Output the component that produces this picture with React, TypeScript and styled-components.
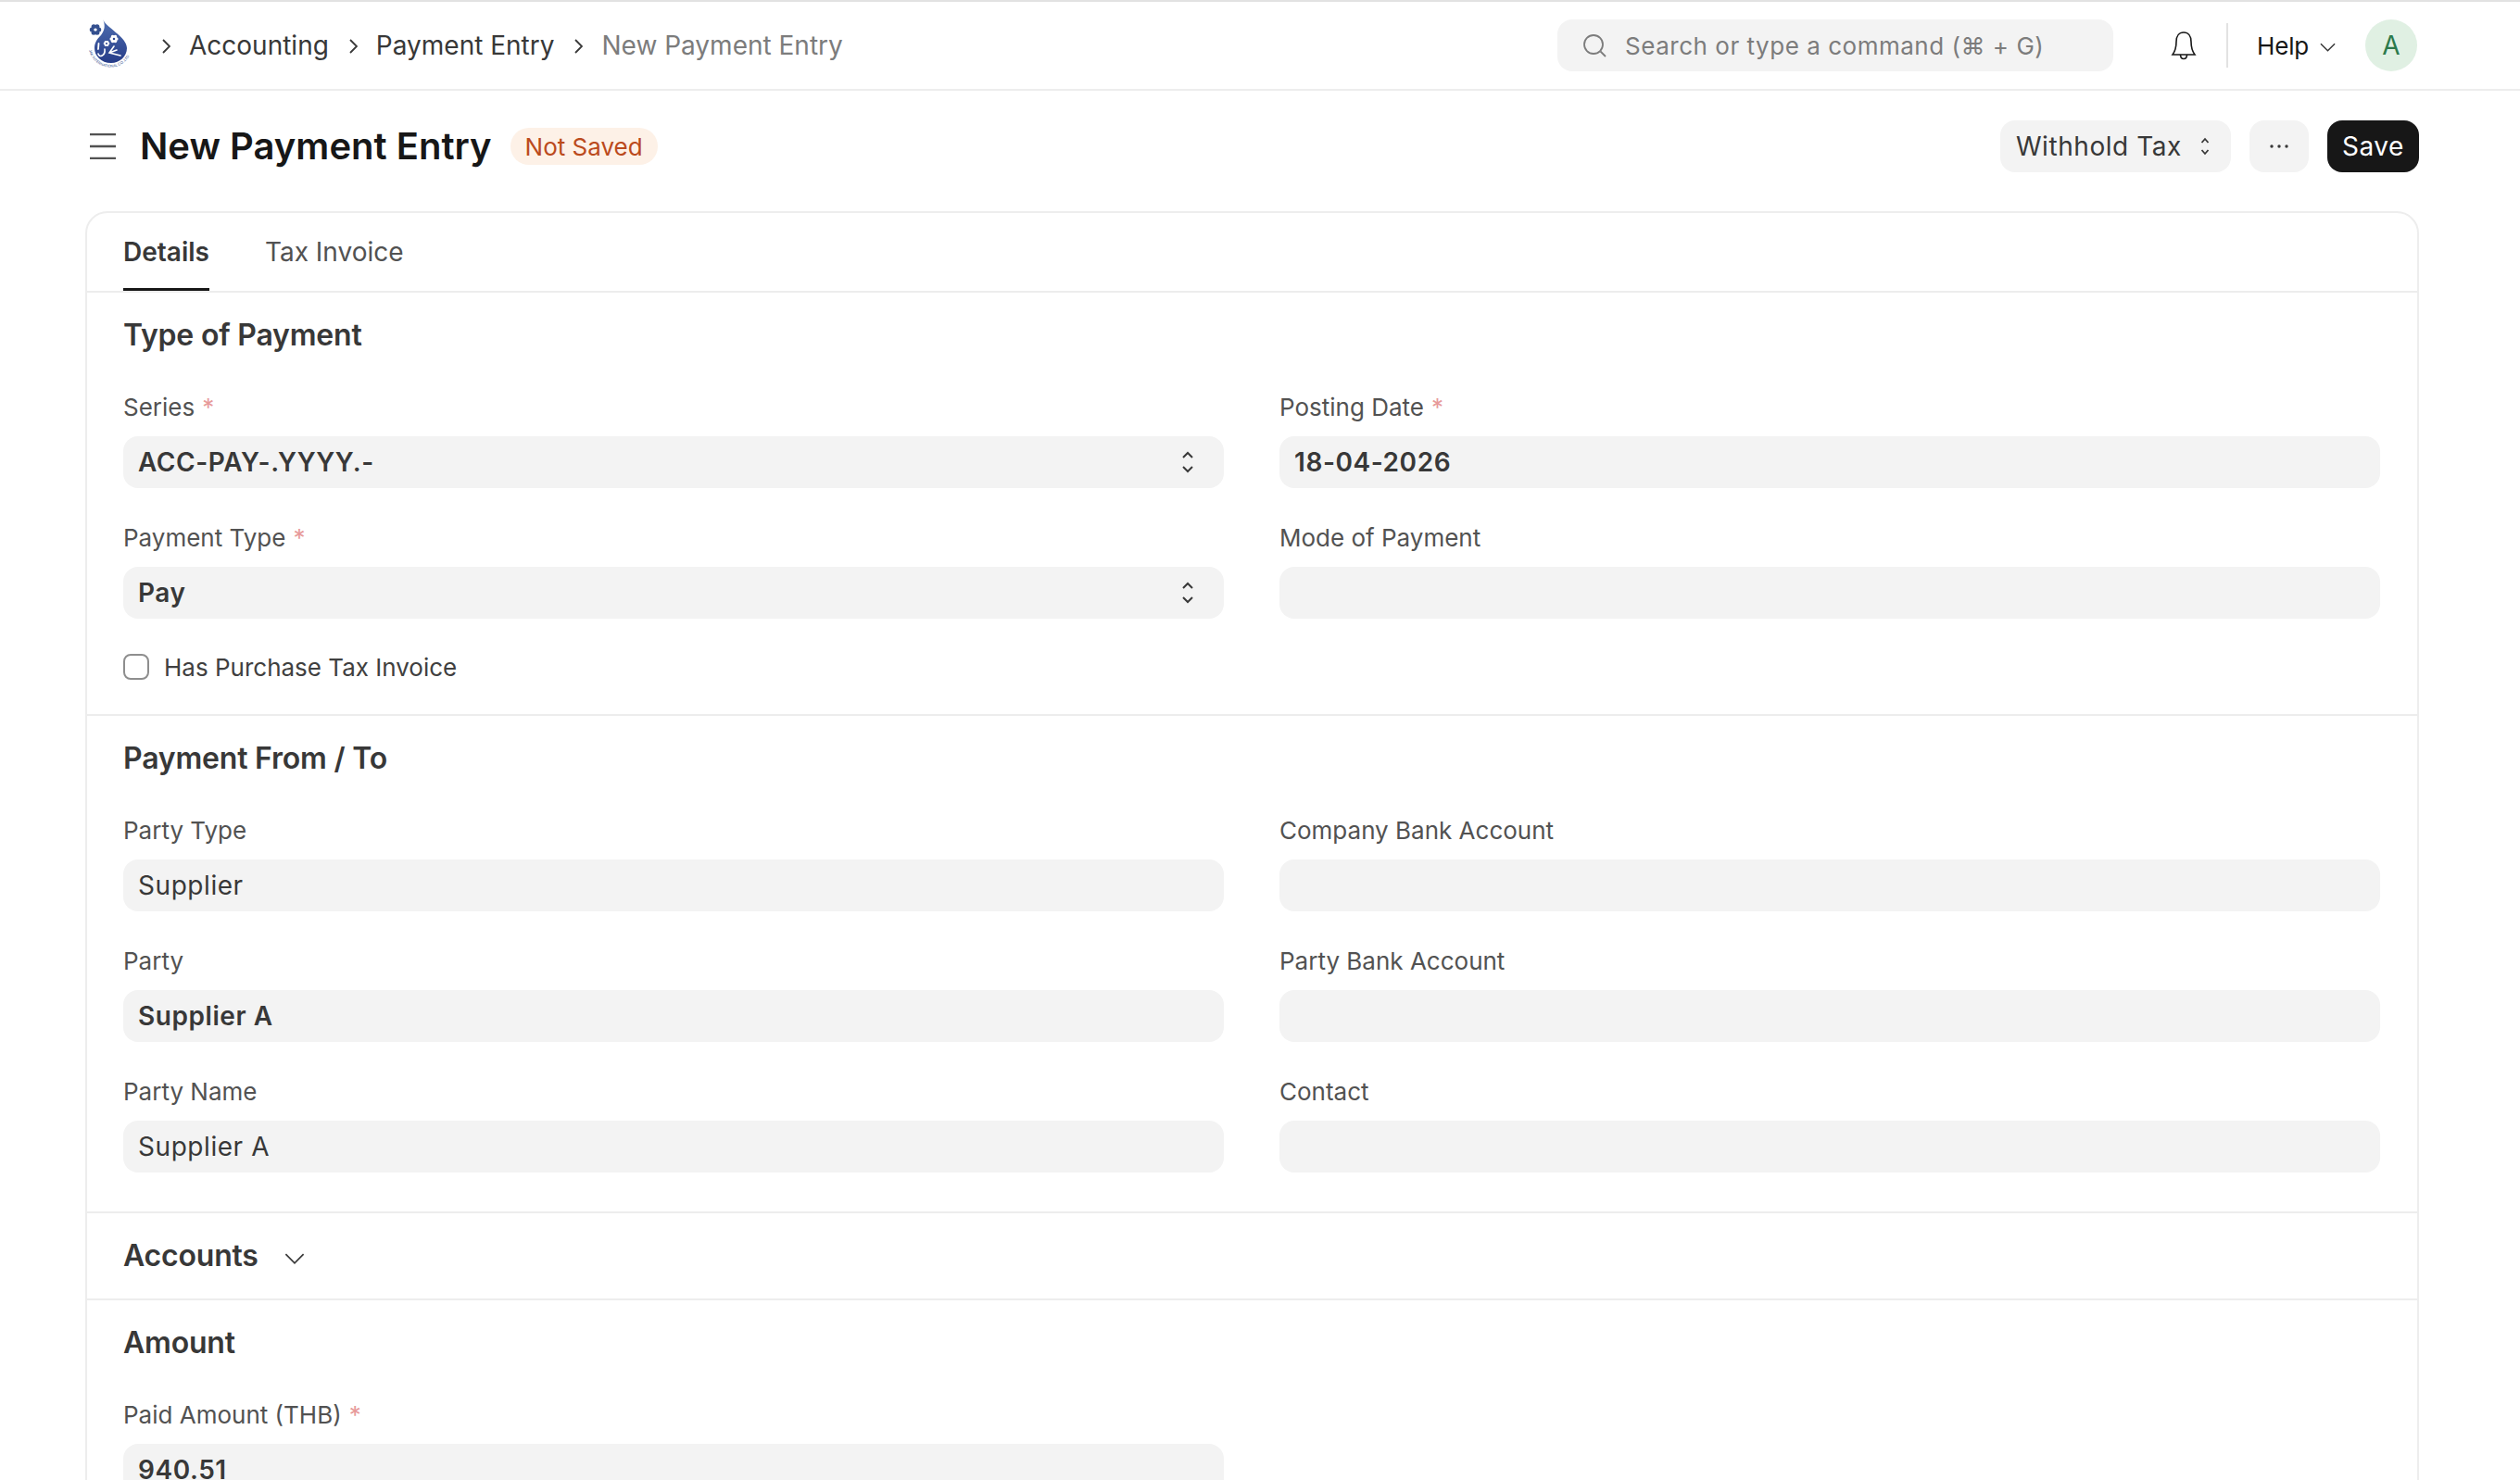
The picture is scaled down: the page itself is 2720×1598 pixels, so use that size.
import React from "react"
import styled, { createGlobalStyle } from "styled-components"

const GlobalStyle = createGlobalStyle`
  * {
    box-sizing: border-box;
  }
  html, body {
    margin: 0;
    height: 1598px;
    overflow: hidden;
    background: #fff;
  }
  body {
    font-family: "Inter", "Liberation Sans", sans-serif;
    font-size: 26px;
    color: #383838;
  }
`

const Navbar = styled.header`
  height: 98px;
  border-top: 2px solid #e2e2e2;
  border-bottom: 2px solid #ededed;
  display: flex;
  align-items: center;
  padding: 0 111px 0 92px;
`
const Crumbs = styled.nav`
  display: flex;
  align-items: center;
  flex: 1;
  margin-left: 11px;
`
const CrumbSep = styled.svg`
  width: 10px;
  height: 16px;
  margin: 2px 20px 0 21px;
  fill: none;
  stroke: #383838;
  stroke-width: 1.8;
`
const Crumb = styled.span<{ $muted?: boolean }>`
  font-size: 28px;
  line-height: 40px;
  color: ${(p) => (p.$muted ? "#7c7c7c" : "#383838")};
`
const Search = styled.div`
  width: 600px;
  height: 56px;
  border-radius: 16px;
  background: #f3f3f3;
  display: flex;
  align-items: center;
  gap: 20px;
  padding-left: 27px;
  font-size: 26px;
  letter-spacing: 0.52px;
  color: #7c7c7c;
  svg {
    width: 26px;
    height: 26px;
    fill: none;
    stroke: #7c7c7c;
    stroke-width: 1.8;
  }
`
const BellBtn = styled.svg`
  width: 28px;
  height: 32px;
  margin-left: 62px;
  fill: none;
  stroke: #171717;
  stroke-width: 1.6;
`
const NavDivider = styled.div`
  width: 2px;
  height: 48px;
  background: #e2e2e2;
  margin: 0 31px 0 32px;
`
const Help = styled.div`
  display: flex;
  align-items: center;
  gap: 12px;
  color: #171717;
  font-size: 26px;
  letter-spacing: -0.2px;
  svg {
    width: 17px;
    height: 10px;
    margin-top: 4px;
    fill: none;
    stroke: #383838;
    stroke-width: 1.6;
  }
`
const Avatar = styled.div`
  width: 56px;
  height: 56px;
  margin-left: 32px;
  border-radius: 50%;
  background: #e0f0e3;
  color: #2c7a4b;
  display: flex;
  align-items: center;
  justify-content: center;
  font-size: 28px;
`

const PageHead = styled.div`
  height: 130px;
  display: flex;
  align-items: center;
  padding: 0 109px 10px 92px;
`
const Burger = styled.svg`
  width: 28px;
  height: 28px;
  margin-left: 5px;
  stroke: #525252;
  stroke-width: 2.4;
  fill: none;
`
const Title = styled.h1`
  margin: 0 0 0 26px;
  font-size: 40px;
  font-weight: 600;
  color: #171717;
  line-height: 56px;
`
const Badge = styled.span`
  margin-left: 20px;
  height: 40px;
  padding: 0 16px;
  border-radius: 20px;
  background: #fdf1e7;
  color: #bb4a1c;
  font-size: 26px;
  display: flex;
  align-items: center;
`
const Actions = styled.div`
  margin-left: auto;
  display: flex;
  gap: 20px;
`
const Button = styled.button<{ $primary?: boolean }>`
  font: inherit;
  font-size: 28px;
  letter-spacing: 0.56px;
  height: 56px;
  border: 0;
  border-radius: 16px;
  padding: 0 16px;
  display: flex;
  align-items: center;
  gap: 20px;
  background: ${(p) => (p.$primary ? "#171717" : "#f3f3f3")};
  color: ${(p) => (p.$primary ? "#fff" : "#383838")};
`
const WithholdButton = styled(Button)`
  padding: 0 23px 0 17px;
`
const DotsButton = styled(Button)`
  width: 64px;
  justify-content: center;
  padding: 0;
`
const UpDown = styled.svg`
  width: 10px;
  height: 20px;
  fill: none;
  stroke: #383838;
  stroke-width: 1.8;
`

const Card = styled.main`
  margin: 0 109px 0 92px;
  border: 2px solid #ededed;
  border-radius: 24px;
`
const Tabs = styled.div`
  height: 86px;
  padding: 0 39px;
  display: flex;
  gap: 60px;
  border-bottom: 2px solid #ededed;
`
const Tab = styled.div<{ $active?: boolean }>`
  height: 84px;
  padding-top: 3px;
  display: flex;
  align-items: center;
  font-size: 28px;
  font-weight: ${(p) => (p.$active ? 600 : 400)};
  color: ${(p) => (p.$active ? "#383838" : "#525252")};
  border-bottom: 3px solid ${(p) => (p.$active ? "#171717" : "transparent")};
`
const Section = styled.section<{ $bottom: number }>`
  padding: 26px 39px ${(p) => p.$bottom}px;
  & + & {
    border-top: 2px solid #ededed;
  }
`
const SectionTitle = styled.h2<{ $gap?: number }>`
  margin: 0 0 ${(p) => p.$gap ?? 42}px;
  font-size: 32px;
  line-height: 40px;
  font-weight: 600;
  letter-spacing: -0.2px;
  color: #383838;
  display: flex;
  align-items: center;
  gap: 28px;
  svg {
    width: 22px;
    height: 12px;
    margin-top: 6px;
    fill: none;
    stroke: #383838;
    stroke-width: 1.4;
  }
`
const FormGrid = styled.div`
  display: grid;
  grid-template-columns: 1188px 1188px;
  column-gap: 60px;
  row-gap: 38px;
`
const Field = styled.div``
const Label = styled.label`
  display: block;
  height: 32px;
  line-height: 32px;
  margin-bottom: 15px;
  font-size: 26px;
  color: #525252;
`
const Req = styled.span`
  color: #e79a9a;
  margin-left: 8px;
`
const Input = styled.div<{ $bold?: boolean }>`
  height: 56px;
  border-radius: 16px;
  background: #f3f3f3;
  padding: 0 16px;
  display: flex;
  align-items: center;
  justify-content: space-between;
  font-size: 28px;
  color: #383838;
  font-weight: ${(p) => (p.$bold ? 600 : 400)};
  letter-spacing: 0.56px;
`
const SelectArrows = styled.svg`
  width: 14px;
  height: 24px;
  margin-right: 16px;
  fill: none;
  stroke: #383838;
  stroke-width: 2;
`
const CheckRow = styled.div`
  margin-top: 38px;
  display: flex;
  align-items: center;
  gap: 16px;
  height: 28px;
  font-size: 26px;
  color: #404040;
`
const Checkbox = styled.span`
  width: 28px;
  height: 28px;
  border: 2px solid #8e8e8e;
  border-radius: 8px;
  background: #fff;
`

const Flower = ({ x, y, r }: { x: number; y: number; r: number }) => (
  <g>
    {[0, 60, 120, 180, 240, 300].map((a) => (
      <circle
        key={a}
        cx={x + r * 0.62 * Math.cos((a * Math.PI) / 180)}
        cy={y + r * 0.62 * Math.sin((a * Math.PI) / 180)}
        r={r * 0.42}
      />
    ))}
  </g>
)

const Logo = () => (
  <svg width="50" height="56" viewBox="0 0 50 56">
    <defs>
      <linearGradient id="drop" x1="0" y1="0" x2="0" y2="1">
        <stop offset="0" stopColor="#4f6fb0" />
        <stop offset="1" stopColor="#263c88" />
      </linearGradient>
      <path id="arc" d="M4 33 A23.5 23.5 0 0 0 50 33" />
    </defs>
    <path
      d="M19 0 C23 9 45 19 45 31 C45 40 37 47 28 47 C17 47 10 39 10 31 C10 25 13 21 17 17 C21 12 22 6 19 0Z"
      fill="url(#drop)"
    />
    <g fill="#34508f">
      <Flower x={11} y={11} r={6} />
    </g>
    <circle cx="11" cy="11" r="1.6" fill="#fff" />
    <g fill="#fff">
      <Flower x={31} y={21} r={4.4} />
      <Flower x={23} y={26} r={3.2} />
    </g>
    <circle cx="31" cy="21" r="1.2" fill="#2f4790" />
    <circle cx="23" cy="26" r="0.9" fill="#2f4790" />
    <g fill="none" stroke="#fff" strokeLinecap="round">
      <path d="M14.5 26 L14 32" strokeWidth="1.8" />
      <path d="M21 32 C22 39 15 42 14 37" strokeWidth="1.6" />
      <path d="M31 29 L26 36 L38 39 M26 36 L34 33" strokeWidth="1.6" />
    </g>
    <text fontSize="4" fill="#34508f" fontFamily="Liberation Sans, sans-serif">
      <textPath href="#arc">JAK INTERNATIONAL CO.,LTD</textPath>
    </text>
  </svg>
)

const Sep = () => (
  <CrumbSep viewBox="0 0 10 16">
    <path d="M2 1l7 7-7 7" />
  </CrumbSep>
)

const SelectIcon = () => (
  <SelectArrows viewBox="0 0 14 24">
    <path d="M2 7l5-5 5 5M2 17l5 5 5-5" />
  </SelectArrows>
)

const Chevron = () => (
  <svg viewBox="0 0 18 10">
    <path d="M1 1l8 8 8-8" />
  </svg>
)

type FieldDef = {
  label: string
  value?: string
  req?: boolean
  bold?: boolean
  select?: boolean
}

const FormField = ({ label, value, req, bold, select }: FieldDef) => (
  <Field>
    <Label>
      {label}
      {req && <Req>*</Req>}
    </Label>
    <Input $bold={bold}>
      {value}
      {select && <SelectIcon />}
    </Input>
  </Field>
)

const typeFields: FieldDef[] = [
  { label: "Series", value: "ACC-PAY-.YYYY.-", req: true, bold: true, select: true },
  { label: "Posting Date", value: "18-04-2026", req: true, bold: true },
  { label: "Payment Type", value: "Pay", req: true, bold: true, select: true },
  { label: "Mode of Payment" },
]

const partyFields: FieldDef[] = [
  { label: "Party Type", value: "Supplier" },
  { label: "Company Bank Account" },
  { label: "Party", value: "Supplier A", bold: true },
  { label: "Party Bank Account" },
  { label: "Party Name", value: "Supplier A" },
  { label: "Contact" },
]

export default function App() {
  return (
    <>
      <GlobalStyle />
      <Navbar>
        <Logo />
        <Crumbs>
          <Sep />
          <Crumb>Accounting</Crumb>
          <Sep />
          <Crumb>Payment Entry</Crumb>
          <Sep />
          <Crumb $muted>New Payment Entry</Crumb>
        </Crumbs>
        <Search>
          <svg viewBox="0 0 26 26">
            <circle cx="12" cy="12" r="10" />
            <path d="M19.5 19.5L25 25" />
          </svg>
          Search or type a command (⌘ + G)
        </Search>
        <BellBtn viewBox="0 0 28 32">
          <path d="M14 2c-5 0-8 4-8 10 0 6-1 10-4 14h24c-3-4-4-8-4-14 0-6-3-10-8-10z" />
          <path d="M10.5 26c0 3 1.500 4.500 3.500 4.500s3.500-1.500 3.500-4.500" />
        </BellBtn>
        <NavDivider />
        <Help>
          Help
          <Chevron />
        </Help>
        <Avatar>A</Avatar>
      </Navbar>
      <PageHead>
        <Burger viewBox="0 0 28 28">
          <path d="M0 1h28M0 14h28M0 27h28" />
        </Burger>
        <Title>New Payment Entry</Title>
        <Badge>Not Saved</Badge>
        <Actions>
          <WithholdButton>
            Withhold Tax
            <UpDown viewBox="0 0 10 20">
              <path d="M1.500 6l3.500-4 3.500 4M1.500 14l3.500 4 3.500-4" />
            </UpDown>
          </WithholdButton>
          <DotsButton>
            <svg width="20" height="4" viewBox="0 0 20 4" fill="#383838">
              <circle cx="2" cy="2" r="1.700" />
              <circle cx="10" cy="2" r="1.700" />
              <circle cx="18" cy="2" r="1.700" />
            </svg>
          </DotsButton>
          <Button $primary>Save</Button>
        </Actions>
      </PageHead>
      <Card>
        <Tabs>
          <Tab $active>Details</Tab>
          <Tab>Tax Invoice</Tab>
        </Tabs>
        <Section $bottom={37}>
          <SectionTitle>Type of Payment</SectionTitle>
          <FormGrid>
            {typeFields.map((f) => (
              <FormField key={f.label} {...f} />
            ))}
          </FormGrid>
          <CheckRow>
            <Checkbox />
            Has Purchase Tax Invoice
          </CheckRow>
        </Section>
        <Section $bottom={42}>
          <SectionTitle>Payment From / To</SectionTitle>
          <FormGrid>
            {partyFields.map((f) => (
              <FormField key={f.label} {...f} />
            ))}
          </FormGrid>
        </Section>
        <Section $bottom={26}>
          <SectionTitle $gap={0}>
            Accounts
            <Chevron />
          </SectionTitle>
        </Section>
        <Section $bottom={26}>
          <SectionTitle>Amount</SectionTitle>
          <FormGrid>
            <FormField label="Paid Amount (THB)" value="940.51" req bold />
          </FormGrid>
        </Section>
      </Card>
    </>
  )
}
